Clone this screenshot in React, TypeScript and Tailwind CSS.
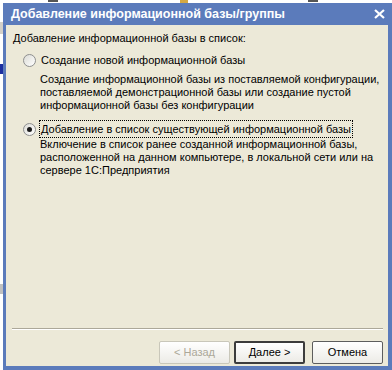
import { ReactNode } from 'react';

const font = { fontFamily: '"Liberation Sans", Arial, sans-serif' };

function Radio({ checked }: { checked?: boolean }) {
  return (
    <span className="relative flex h-[13px] w-[13px] shrink-0 items-center justify-center rounded-full border border-[#8e8f8f] bg-gradient-to-br from-[#dcdcd6] to-white">
      {checked && <span className="h-[5px] w-[5px] rounded-full bg-[#1a1a1a]" />}
    </span>
  );
}

function Option({ checked, label, descGap, children }: { checked?: boolean; label: string; descGap: string; children: ReactNode }) {
  return (
    <div className="flex flex-col">
      <div className="flex h-[15px] items-center gap-[4px] pl-[12px]">
        <Radio checked={checked} />
        <span className={checked ? 'px-[1px] outline outline-1 outline-dotted outline-black' : 'px-[1px]'}>{label}</span>
      </div>
      <div className={descGap + ' pl-[29px] leading-[13px]'}>{children}</div>
    </div>
  );
}

function WizButton({ children, primary, disabled }: { children: ReactNode; primary?: boolean; disabled?: boolean }) {
  return (
    <button
      className={
        'flex h-[23px] w-[71px] items-center justify-center rounded-[2px] bg-gradient-to-b from-white to-[#ecebe6] text-[11px] ' +
        (primary
          ? 'border-2 border-[#3c3c3c] text-black'
          : disabled
            ? 'border border-[#c9c7ba] text-[#aca899]'
            : 'border border-[#5d5d5d] text-black')
      }
    >
      {children}
    </button>
  );
}

export default function App() {
  return (
    <div className="relative h-[370px] w-[392px] overflow-hidden bg-white" style={font}>
      {/* background app behind the dialog */}
      <div className="absolute left-0 top-0 flex h-[3px] w-full">
        <span className="ml-[48px] h-[2px] w-[10px] border border-[#555]" />
        <span className="ml-[122px] h-[3px] w-[8px] bg-[#d4a843]" />
        <span className="ml-[120px] h-[2px] w-[10px] border border-[#555]" />
      </div>
      <div className="absolute left-0 top-0 flex h-full w-[3px] flex-col">
        <div className="h-[22px] bg-white" />
        <div className="h-[12px] bg-[#d4d0c8]" />
        <div className="h-[30px] bg-white" />
        <div className="h-[10px] bg-[#1c2fa0]" />
        <div className="h-[210px] bg-white" />
        <div className="h-[10px] bg-[#c0c0c0]" />
        <div className="flex-1 bg-white" />
      </div>

      <div className="ml-[3px] mt-[3px] flex h-[367px] flex-col bg-[#5b7bbb]">
        <div className="flex h-[22px] items-center justify-between pl-[8px] pr-[7px] text-[12.5px] font-bold text-white">
          <span>Добавление информационной базы/группы</span>
          <svg width="11" height="10" viewBox="0 0 11 10">
            <path d="M1 1 L10 9 M10 1 L1 9" stroke="white" strokeWidth="2.2" />
          </svg>
        </div>
        <div className="mb-[4px] ml-[3px] mr-[4px] flex flex-1 flex-col bg-[#ece9d8] pb-[2px] pr-[5px] text-[11px] text-black">
          <div className="pl-[7px] pt-[5px]">Добавление информационной базы в список:</div>
          <div className="mt-[6px] flex flex-col gap-[10px] pl-[5px]">
            <Option label="Создание новой информационной базы" descGap="mt-[5px]">
              <div>Создание информационной базы из поставляемой конфигурации,</div>
              <div>поставляемой демонстрационной базы или создание пустой</div>
              <div>информационной базы без конфигурации</div>
            </Option>
            <Option checked label="Добавление в список существующей информационной базы" descGap="mt-[1px]">
              <div>Включение в список ранее созданной информационной базы,</div>
              <div>расположенной на данном компьютере,  в локальной сети или на</div>
              <div>сервере 1С:Предприятия</div>
            </Option>
          </div>
          <div className="flex-1" />
          <div className="ml-[6px] border-t border-b border-t-[#aca899] border-b-white" />
          <div className="mt-[11px] flex justify-end">
            <WizButton disabled>&lt; Назад</WizButton>
            <div className="ml-[4px]">
              <WizButton primary>Далее &gt;</WizButton>
            </div>
            <div className="ml-[7px]">
              <WizButton>Отмена</WizButton>
            </div>
          </div>
        </div>
      </div>
    </div>
  );
}
